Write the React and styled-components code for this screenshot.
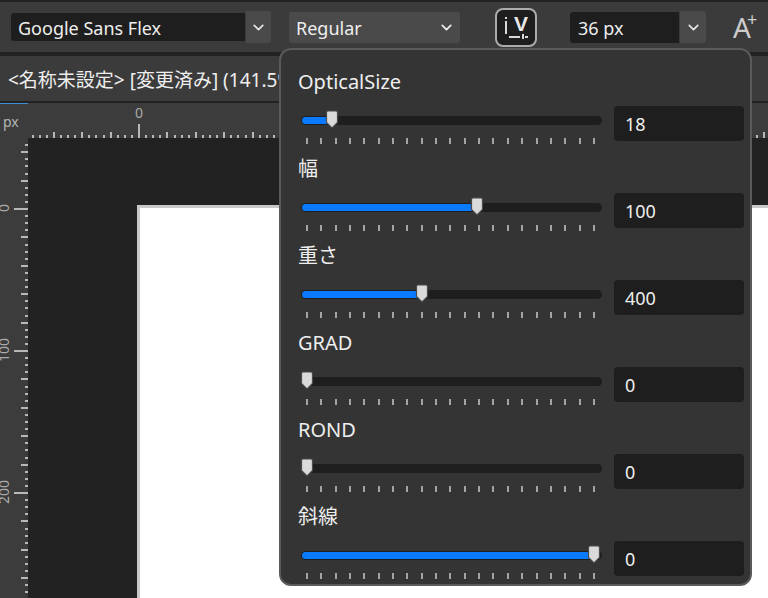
import styled, { createGlobalStyle } from "styled-components";
import { ChevronDown } from "lucide-react";

const GlobalStyle = createGlobalStyle`
    body {
        margin: 0;
        background: #222222;
        font-family: "Noto Sans", "Noto Sans CJK JP", sans-serif;
        color: #eeeeee;
    }
`;

const Page = styled.div`
    position: relative;
    width: 768px;
    height: 598px;
    overflow: hidden;
    padding-top: 2px;
    box-sizing: border-box;
    background: #222222;
    display: flex;
    flex-direction: column;
`;

const Toolbar = styled.div`
    height: 50px;
    background: #3b3b3b;
    display: flex;
    align-items: center;
    padding-left: 11px;
    flex-shrink: 0;
    margin-bottom: 4px;
`;

const Field = styled.div`
    width: ${(props) => props.width}px;
    height: ${(props) => props.height || 28}px;
    background: #1e1e1e;
    border-radius: 3px 0 0 3px;
    font-size: 18px;
    line-height: ${(props) => (props.height || 28) + 2}px;
    padding-left: ${(props) => props.pad || 7}px;
    box-sizing: border-box;
    margin-left: ${(props) => props.left || 0}px;
`;

const DropButton = styled.div`
    width: ${(props) => props.width || 26}px;
    height: 32px;
    margin-left: 1px;
    background: #4a4a4a;
    border-radius: 0 3px 3px 0;
    display: flex;
    align-items: center;
    justify-content: center;
    color: #e4e4e4;
`;

const StyleSelect = styled.div`
    width: 171px;
    height: 31px;
    margin-left: 18px;
    background: #4a4a4a;
    border-radius: 3px;
    display: flex;
    align-items: center;
    justify-content: space-between;
    padding: 0 5px 0 7px;
    box-sizing: border-box;
    font-size: 18px;
`;

const StyleName = styled.span`
    padding-top: 2px;
`;

const IconButton = styled.div`
    width: 42px;
    height: 39px;
    margin-left: 35px;
    box-sizing: border-box;
    border: 2px solid #ababab;
    border-radius: 8px;
    background: #1e1e1e;
    display: flex;
`;

const GrowFont = styled.div`
    margin-left: 27px;
    color: #cccccc;
    font-size: 28px;
    line-height: 27px;
    display: flex;
    align-items: flex-start;
    sup {
        font-size: 18px;
        line-height: 18px;
        margin: -4px 0 0 -4px;
    }
`;

const TabBar = styled.div`
    height: 45px;
    flex-shrink: 0;
    background: #3b3b3b;
    margin-bottom: 2px;
    padding-left: 8px;
    font-size: 19px;
    line-height: 48px;
    white-space: nowrap;
    overflow: hidden;
`;

const RulerRow = styled.div`
    height: 35px;
    flex-shrink: 0;
    display: flex;
    background: #3c3c3c;
`;

const Corner = styled.div`
    width: 28px;
    box-sizing: border-box;
    border-top: 1px solid #3f8fd8;
    color: #b4b4b4;
    font-size: 14px;
    line-height: 36px;
    padding-left: 3px;
`;

const Workspace = styled.div`
    flex: 1;
    display: flex;
    min-height: 0;
`;

const VRuler = styled.div`
    width: 28px;
    background: #3c3c3c;
    overflow: hidden;
`;

const Canvas = styled.div`
    flex: 1;
    background: #222222;
    padding: 67px 0 0 109px;
    overflow: hidden;
`;

const Sheet = styled.div`
    height: 600px;
    background: #ffffff;
    border: solid #c9c9c9;
    border-width: 3px 0 0 3px;
`;

const Popover = styled.div`
    position: absolute;
    left: 279px;
    top: 48px;
    width: 473px;
    height: 538px;
    box-sizing: border-box;
    background: #343434;
    border: 2px solid #5a5a5a;
    border-radius: 12px;
    padding: 19px 6px 0 17px;
    display: flex;
    flex-direction: column;
    gap: 15px;
`;

const AxisRow = styled.div`
    display: flex;
    flex-direction: column;
    gap: 11px;
`;

const AxisLabel = styled.div`
    font-size: 20px;
    line-height: 26px;
    height: 26px;
`;

const AxisControls = styled.div`
    display: flex;
    gap: 12px;
    height: 35px;
`;

const Slider = styled.div`
    position: relative;
    width: 304px;
    padding: 10px 0 0 3px;
    box-sizing: border-box;
`;

const Track = styled.div`
    height: 9px;
    background: #1e1e1e;
    border-radius: 5px;
    padding: 1px 0 1px 1px;
    box-sizing: border-box;
`;

const Fill = styled.div`
    height: 7px;
    background: #0a7aff;
    border-radius: 4px 0 0 4px;
`;

const Thumb = styled.svg`
    position: absolute;
    top: 4px;
    width: 14px;
    height: 19px;
    margin-left: -7px;
`;

const Ticks = styled.div`
    display: flex;
    justify-content: space-between;
    margin: 13px 7px 0 5px;
`;

const Tick = styled.span`
    width: 2px;
    height: 6px;
    background: #a4a4a4;
`;

const ValueBox = styled.div`
    width: 130px;
    height: 35px;
    background: #1e1e1e;
    border-radius: 4px;
    padding-left: 11px;
    box-sizing: border-box;
    font-size: 18px;
    line-height: 37px;
`;

const axes = [
    { name: "OpticalSize", value: "18", pos: 8.7 },
    { name: "幅", value: "100", pos: 59.4 },
    { name: "重さ", value: "400", pos: 39.9 },
    { name: "GRAD", value: "0", pos: 0 },
    { name: "ROND", value: "0", pos: 0 },
    { name: "斜線", value: "0", pos: 100 },
];

const STEP = 7.1;

function Chevron() {
    return <ChevronDown size={17} strokeWidth={2.4} />;
}

function AxisIcon() {
    return (
        <svg width="38" height="35" viewBox="0 0 38 35">
            <g fill="#d8d8d8">
                <rect x="8" y="7" width="2" height="2" />
                <rect x="8" y="11" width="2" height="13" />
                <rect x="12" y="26" width="11" height="2" />
                <rect x="25" y="24" width="2" height="5" />
                <rect x="28" y="26" width="3" height="2" />
            </g>
            <text x="17" y="21" fill="#e8e8e8" fontFamily="Liberation Sans" fontWeight="700" fontSize="21">
                V
            </text>
        </svg>
    );
}

function HorizontalRuler() {
    const ticks = [];
    for (let i = -15; i <= 88; i++) {
        const x = 110 + i * STEP;
        const len = i % 20 === 0 ? 14 : i % 4 === 0 ? 6 : 3;
        ticks.push(<rect key={i} x={Math.round(x)} y={35 - len} width="2" height={len} fill="#b8b8b8" />);
    }
    return (
        <svg width="740" height="35">
            {ticks}
            <text x="111" y="15" textAnchor="middle" fontSize="14" fill="#aaaaaa" fontFamily="Noto Sans">
                0
            </text>
        </svg>
    );
}

function VerticalRuler() {
    const ticks = [];
    for (let i = -9; i <= 65; i++) {
        const y = 70 + i * STEP;
        const len = i % 20 === 0 ? 14 : i % 4 === 0 ? 7 : 3;
        ticks.push(<rect key={i} x={28 - len} y={Math.round(y)} width={len} height="2" fill="#b8b8b8" />);
    }
    const labels = [
        { y: 70, text: "0" },
        { y: 212, text: "100" },
        { y: 354, text: "200" },
    ];
    return (
        <svg width="28" height="460">
            {ticks}
            {labels.map((label) => (
                <text
                    key={label.text}
                    transform={`translate(9 ${label.y}) rotate(-90)`}
                    textAnchor="middle"
                    fontSize="14"
                    fill="#aaaaaa"
                    fontFamily="Noto Sans"
                >
                    {label.text}
                </text>
            ))}
        </svg>
    );
}

function Axis({ name, value, pos }) {
    return (
        <AxisRow>
            <AxisLabel>{name}</AxisLabel>
            <AxisControls>
                <Slider>
                    <Track>
                        <Fill style={{ width: `${(pos / 100) * 287 + 5}px` }} />
                    </Track>
                    <Thumb viewBox="0 0 14 19" style={{ left: `${9 + (pos / 100) * 287}px` }}>
                        <path d="M1.5 2.5Q1.5 1 3 1H11Q12.5 1 12.5 2.5V12.5L7 18L1.5 12.5Z" fill="#dadada" stroke="#4a4a4a" strokeWidth="1.2" />
                    </Thumb>
                    <Ticks>
                        {Array.from({ length: 21 }, (_, i) => (
                            <Tick key={i} />
                        ))}
                    </Ticks>
                </Slider>
                <ValueBox>{value}</ValueBox>
            </AxisControls>
        </AxisRow>
    );
}

export default function App() {
    return (
        <Page>
            <GlobalStyle />
            <Toolbar>
                <Field width={234}>Google Sans Flex</Field>
                <DropButton width={25}>
                    <Chevron />
                </DropButton>
                <StyleSelect>
                    <StyleName>Regular</StyleName>
                    <Chevron />
                </StyleSelect>
                <IconButton>
                    <AxisIcon />
                </IconButton>
                <Field width={109} height={31} left={33} pad={8}>
                    36 px
                </Field>
                <DropButton>
                    <Chevron />
                </DropButton>
                <GrowFont>
                    A<sup>+</sup>
                </GrowFont>
            </Toolbar>
            <TabBar>&lt;名称未設定&gt; [変更済み] (141.5%)</TabBar>
            <RulerRow>
                <Corner>px</Corner>
                <HorizontalRuler />
            </RulerRow>
            <Workspace>
                <VRuler>
                    <VerticalRuler />
                </VRuler>
                <Canvas>
                    <Sheet />
                </Canvas>
            </Workspace>
            <Popover>
                {axes.map((axis) => (
                    <Axis key={axis.name} {...axis} />
                ))}
            </Popover>
        </Page>
    );
}
